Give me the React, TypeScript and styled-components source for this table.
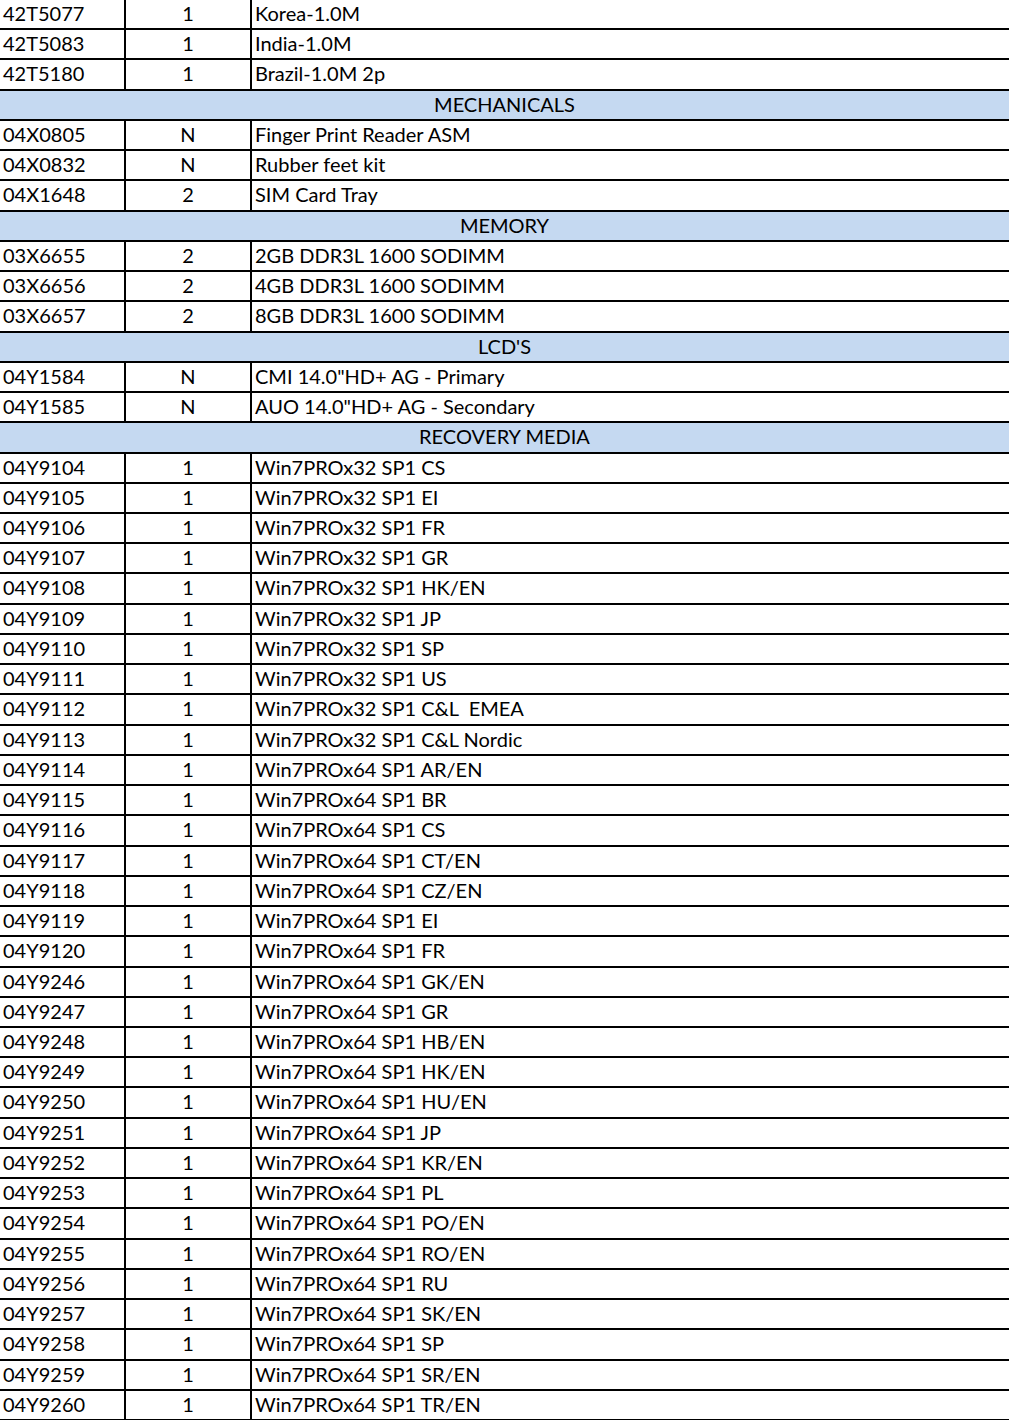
import React from "react";
import styled, { createGlobalStyle } from "styled-components";

const Global = createGlobalStyle`
  html, body { margin: 0; padding: 0; background: #ffffff; }
  body { font-family: Lato, "Open Sans", "Liberation Sans", sans-serif; color: #000; }
`;

type Item = { kind: "row"; part: string; qty: string; desc: string } | { kind: "head"; title: string };

const r = (part: string, qty: string, desc: string): Item => ({ kind: "row", part, qty, desc });
const h = (title: string): Item => ({ kind: "head", title });

const win = (n: number, arch: string, lang: string) => r(`04Y${n}`, "1", `Win7PROx${arch} SP1 ${lang}`);

const items: Item[] = [
  r("42T5077", "1", "Korea-1.0M"),
  r("42T5083", "1", "India-1.0M"),
  r("42T5180", "1", "Brazil-1.0M 2p"),
  h("MECHANICALS"),
  r("04X0805", "N", "Finger Print Reader ASM"),
  r("04X0832", "N", "Rubber feet kit"),
  r("04X1648", "2", "SIM Card Tray"),
  h("MEMORY"),
  r("03X6655", "2", "2GB DDR3L 1600 SODIMM"),
  r("03X6656", "2", "4GB DDR3L 1600 SODIMM"),
  r("03X6657", "2", "8GB DDR3L 1600 SODIMM"),
  h("LCD'S"),
  r("04Y1584", "N", 'CMI 14.0"HD+ AG - Primary'),
  r("04Y1585", "N", 'AUO 14.0"HD+ AG - Secondary'),
  h("RECOVERY MEDIA"),
  win(9104, "32", "CS"),
  win(9105, "32", "EI"),
  win(9106, "32", "FR"),
  win(9107, "32", "GR"),
  win(9108, "32", "HK/EN"),
  win(9109, "32", "JP"),
  win(9110, "32", "SP"),
  win(9111, "32", "US"),
  win(9112, "32", "C&L  EMEA"),
  win(9113, "32", "C&L Nordic"),
  win(9114, "64", "AR/EN"),
  win(9115, "64", "BR"),
  win(9116, "64", "CS"),
  win(9117, "64", "CT/EN"),
  win(9118, "64", "CZ/EN"),
  win(9119, "64", "EI"),
  win(9120, "64", "FR"),
  win(9246, "64", "GK/EN"),
  win(9247, "64", "GR"),
  win(9248, "64", "HB/EN"),
  win(9249, "64", "HK/EN"),
  win(9250, "64", "HU/EN"),
  win(9251, "64", "JP"),
  win(9252, "64", "KR/EN"),
  win(9253, "64", "PL"),
  win(9254, "64", "PO/EN"),
  win(9255, "64", "RO/EN"),
  win(9256, "64", "RU"),
  win(9257, "64", "SK/EN"),
  win(9258, "64", "SP"),
  win(9259, "64", "SR/EN"),
  win(9260, "64", "TR/EN"),
];

const Sheet = styled.div`
  width: 1009px;
  display: flex;
  flex-direction: column;
  overflow: hidden;
`;

const Row = styled.div`
  display: grid;
  grid-template-columns: 124px 2px 124px 2px 1fr;
  height: 30.24px;
  box-sizing: border-box;
  border-bottom: 2px solid #000;
  font-size: 20px;
  line-height: 26px;
`;

const Sep = styled.div`
  background: #000;
`;

const Cell = styled.div<{ $align?: "left" | "center" }>`
  padding: 0 3px;
  text-align: ${(p) => p.$align ?? "left"};
  white-space: pre;
  overflow: hidden;
`;

const HeadRow = styled.div`
  height: 30.24px;
  box-sizing: border-box;
  border-bottom: 2px solid #000;
  background: #c5d9f1;
  text-align: center;
  font-size: 20px;
  line-height: 26px;
`;

export default function App() {
  return (
    <>
      <Global />
      <Sheet>
        {items.map((it, i) =>
          it.kind === "head" ? (
            <HeadRow key={i}>{it.title}</HeadRow>
          ) : (
            <Row key={i}>
              <Cell>{it.part}</Cell>
              <Sep />
              <Cell $align="center">{it.qty}</Cell>
              <Sep />
              <Cell>{it.desc}</Cell>
            </Row>
          )
        )}
      </Sheet>
    </>
  );
}
